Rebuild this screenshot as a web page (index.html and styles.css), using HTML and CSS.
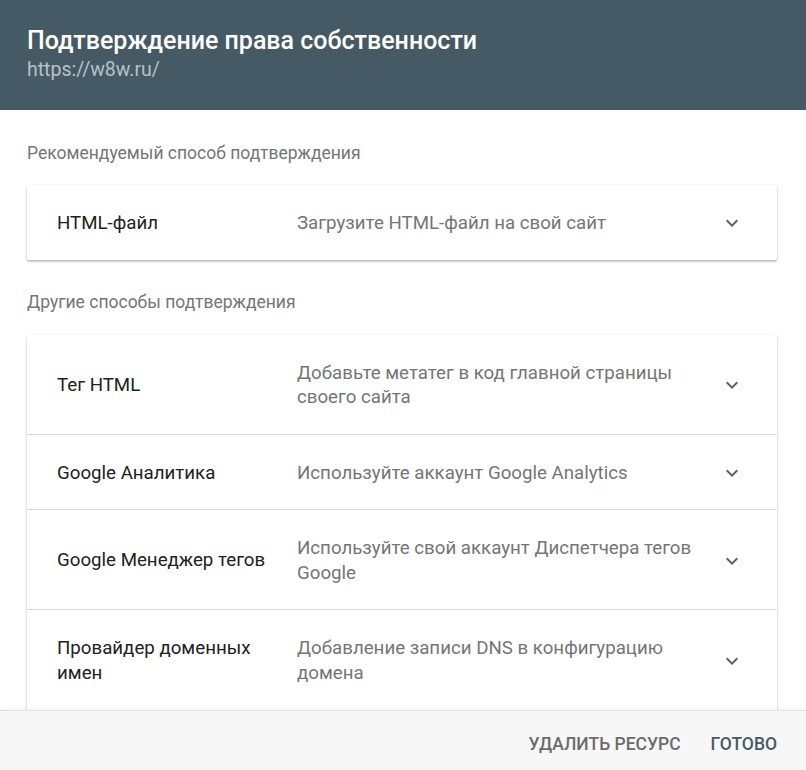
FILE: index.html
```html
<!DOCTYPE html>
<html lang="ru">
<head>
<meta charset="utf-8">
<link rel="stylesheet" href="styles.css">
</head>
<body>
<div class="dialog">
  <header class="head">
    <div class="title">Подтверждение права собственности</div>
    <div class="url">https://w8w.ru/</div>
  </header>
  <main class="content">
    <div class="section-label">Рекомендуемый способ подтверждения</div>
    <div class="card">
      <div class="row">
        <div class="name">HTML-файл</div>
        <div class="desc">Загрузите HTML-файл на свой сайт</div>
        <svg class="chev" viewBox="0 0 24 24" width="24" height="24"><path d="M16.59 8.59L12 13.17 7.41 8.59 6 10l6 6 6-6z"/></svg>
      </div>
    </div>
    <div class="section-label second">Другие способы подтверждения</div>
    <div class="card card-long">
      <div class="row">
        <div class="name">Тег HTML</div>
        <div class="desc">Добавьте метатег в код главной страницы своего сайта</div>
        <svg class="chev" viewBox="0 0 24 24" width="24" height="24"><path d="M16.59 8.59L12 13.17 7.41 8.59 6 10l6 6 6-6z"/></svg>
      </div>
      <div class="row">
        <div class="name">Google Аналитика</div>
        <div class="desc">Используйте аккаунт Google Analytics</div>
        <svg class="chev" viewBox="0 0 24 24" width="24" height="24"><path d="M16.59 8.59L12 13.17 7.41 8.59 6 10l6 6 6-6z"/></svg>
      </div>
      <div class="row">
        <div class="name">Google Менеджер тегов</div>
        <div class="desc">Используйте свой аккаунт Диспетчера тегов Google</div>
        <svg class="chev" viewBox="0 0 24 24" width="24" height="24"><path d="M16.59 8.59L12 13.17 7.41 8.59 6 10l6 6 6-6z"/></svg>
      </div>
      <div class="row">
        <div class="name">Провайдер доменных имен</div>
        <div class="desc">Добавление записи DNS в конфигурацию домена</div>
        <svg class="chev" viewBox="0 0 24 24" width="24" height="24"><path d="M16.59 8.59L12 13.17 7.41 8.59 6 10l6 6 6-6z"/></svg>
      </div>
    </div>
  </main>
  <footer class="foot">
    <button class="btn btn-secondary">Удалить ресурс</button>
    <button class="btn btn-primary">Готово</button>
  </footer>
</div>
</body>
</html>
```

FILE: styles.css
```css
* { box-sizing: border-box; }
html, body {
  margin: 0;
  padding: 0;
  height: 100%;
  overflow: hidden;
  font-family: Roboto, "Noto Sans", Arial, sans-serif;
  background: #fff;
}
.dialog {
  display: flex;
  flex-direction: column;
  height: 770px;
}
.head {
  flex: none;
  height: 110px;
  background: #455a64;
  padding: 26px 27px 0;
}
.title {
  color: #fff;
  font-size: 25px;
  font-weight: 500;
  line-height: 30px;
}
.url {
  color: #b7c2c7;
  font-size: 19.5px;
  line-height: 26px;
  margin-top: 1px;
}
.content {
  flex: 1;
  overflow: hidden;
  padding: 31px 29px 0 27px;
}
.section-label {
  color: #757575;
  font-size: 17.5px;
  line-height: 24px;
  margin-bottom: 20px;
}
.section-label.second {
  margin-top: 30px;
  margin-bottom: 21px;
}
.card {
  background: #fff;
  border-radius: 2px;
  box-shadow: 0 1px 3px rgba(0,0,0,0.22), 0 2px 2px rgba(0,0,0,0.12);
}
.card-long {
  padding-bottom: 12px;
}
.row {
  display: flex;
  align-items: center;
  padding: 26px 33px 24px 30px;
  border-bottom: 1px solid #dcdcdc;
  font-size: 18.7px;
  line-height: 24.5px;
}
.row:last-child { border-bottom: none; }
.name {
  flex: none;
  width: 240px;
  padding-right: 20px;
  color: #212121;
}
.desc {
  flex: 1;
  color: #757575;
  padding-right: 12px;
}
.chev {
  flex: none;
  fill: #616161;
}
.foot {
  flex: none;
  height: 60px;
  background: #f7f7f7;
  border-top: 1px solid #e2e2e2;
  box-shadow: 0 -1px 3px rgba(0,0,0,0.06);
  position: relative;
  display: flex;
  justify-content: flex-end;
  align-items: center;
  gap: 30px;
  padding: 6px 29px 0 0;
}
.btn {
  border: none;
  background: none;
  padding: 0;
  font-family: inherit;
  font-size: 17.5px;
  font-weight: 500;
  text-transform: uppercase;
  cursor: pointer;
}
.btn-secondary { color: #6b6b6b; }
.btn-primary { color: #455a64; }
```
